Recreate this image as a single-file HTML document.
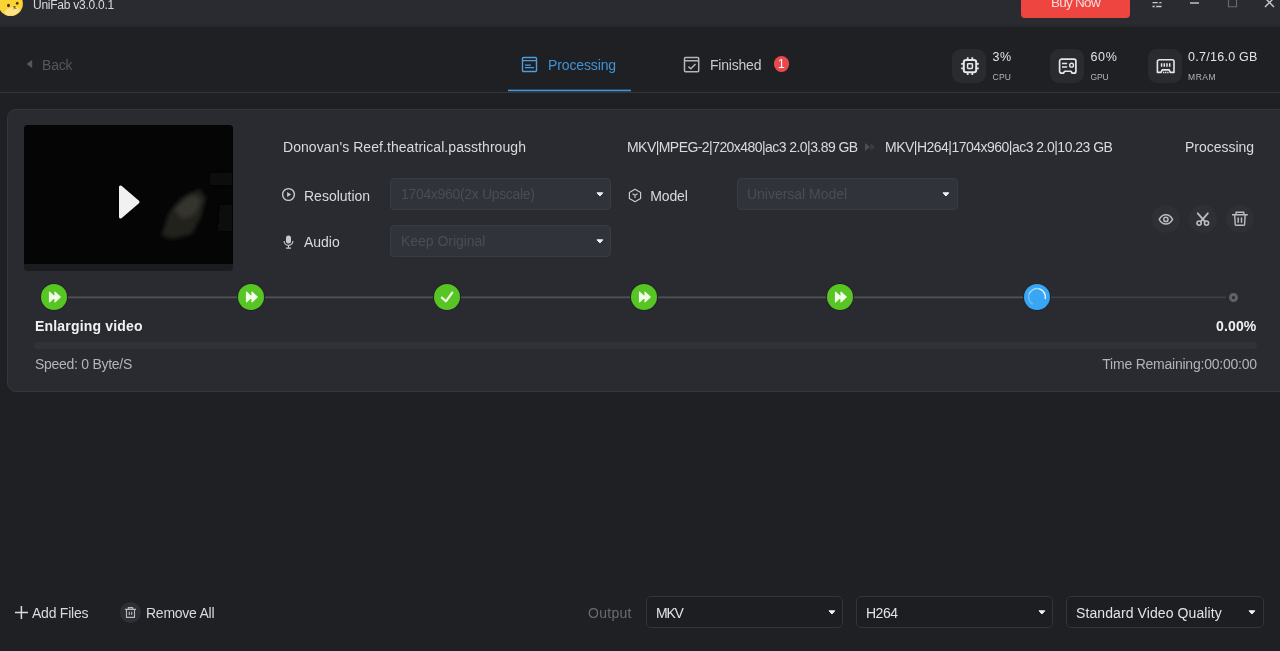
<!DOCTYPE html>
<html lang="en">
<head>
<meta charset="utf-8">
<title>UniFab v3.0.0.1</title>
<style>
*{box-sizing:border-box;margin:0;padding:0}
html,body{width:1280px;height:651px;overflow:hidden;background:#1f2024}
body{will-change:transform;position:relative;font-family:"Liberation Sans",sans-serif;color:#d6d7da;font-size:14px}
.abs{position:absolute}
.t{position:absolute;white-space:nowrap;line-height:20px;height:20px}
#titlebar{left:0;top:0;width:1280px;height:26px;background:#2a2b30}
#buy{left:1021px;top:-7px;width:109px;height:25px;background:#ee4541;border-radius:4px;color:#f8dbd9;text-align:center;font-size:13.5px;line-height:20px}
#sep{left:0;top:92px;width:1280px;height:1px;background:#35363b}
#card{left:7px;top:109px;width:1290px;height:283px;background:#2a2b30;border:1px solid #35363b;border-radius:9px}
.iconbox{position:absolute;top:49px;width:34px;height:34px;border-radius:9px;background:#2a2b2f}
.sel{position:absolute;height:32px;border-radius:4px;background:#31333a;border:1px solid #393b42}
.sel2{position:absolute;height:32px;border-radius:5px;background:#1d1e21;border:1px solid #34353a}
.caret{position:absolute;width:0;height:0;border-left:4px solid transparent;border-right:4px solid transparent;border-top:5px solid #e8e8ea}
.step{position:absolute;top:284px;width:26px;height:26px;border-radius:50%;background:#57c523}
.rbtn{position:absolute;top:205px;width:28px;height:28px;border-radius:50%;background:#2f3036}
</style>
</head>
<body>
<!-- title bar -->
<div id="titlebar" class="abs"></div><div class="abs" style="left:0;top:26px;width:1280px;height:1px;background:#25262a"></div>
<svg class="abs" style="left:0;top:0" width="26" height="20" viewBox="0 0 26 20">
  <circle cx="10.600" cy="3.700" r="12.300" fill="#fad434"/>
  <ellipse cx="12" cy="11.300" rx="7.500" ry="4" fill="#fde48c" transform="rotate(-14 12 11.300)"/>
  <ellipse cx="8.500" cy="5.500" rx="1.500" ry="1.700" fill="#5a2e08"/>
  <ellipse cx="17.200" cy="3.300" rx="1.300" ry="1.500" fill="#5a2e08"/>
  <ellipse cx="14.500" cy="6.900" rx="1.200" ry=".900" fill="#6b4a12"/>
  <path d="M13.300 9.200l1.500-.900 1.700.300" stroke="#8a6a20" stroke-width=".800" fill="none"/>
</svg>
<div class="t" id="ut" style="letter-spacing:-0.248px;left:33px;top:-5px;font-size:12px;color:#d9dadd">UniFab v3.0.0.1</div>
<div id="buy" class="abs"><span id="buyt" style="letter-spacing:-0.75px">Buy Now</span></div>


<!-- window controls -->
<svg class="abs" style="left:1145px;top:0" width="135" height="14" viewBox="0 0 135 14">
  <g stroke="#c9cacd" stroke-width="1.4" fill="none" stroke-linecap="butt">
    <path d="M7.500 2.700h9M7.500 6.500h9" stroke-width="1.300"/>
    <path d="M45 3h9"/>
    <path d="M83.500 -1v7.800h8v-7.800" stroke="#6a6b70" stroke-width="1.100"/>
    <path d="M120 -2l9 9M129 -2l-9 9"/>
  </g>
  <circle cx="13.500" cy="2.700" r=".900" fill="#2a2b30"/><circle cx="10.500" cy="6.500" r=".900" fill="#2a2b30"/>
</svg>

<!-- nav -->
<svg class="abs" style="left:26px;top:59px" width="8" height="10" viewBox="0 0 8 10"><path d="M6.200 .800v8.400L.600 5z" fill="#55575c"/></svg>
<div class="t" id="back" style="letter-spacing:-0.206px;left:42px;top:55px;font-size:14px;color:#55575c">Back</div>

<svg class="abs" style="left:521px;top:55.700px" width="17" height="17" viewBox="0 0 17 17" fill="none" stroke="#4f9ddb" stroke-width="1.400">
  <rect x="1.500" y="1.500" width="14" height="14" rx="1"/><path d="M1.500 4.600h14M4 9.100h5.800M4 11.600h9"/>
</svg>
<div class="t" id="tproc" style="letter-spacing:-0.127px;left:548px;top:55px;font-size:14px;color:#3f93d8">Processing</div>
<div class="abs" style="left:508px;top:90px;width:123px;height:1px;background:#4596d6;box-shadow:0 -1px 0 rgba(69,150,214,.35),0 1px 0 rgba(69,150,214,.25)"></div>

<svg class="abs" style="left:682.600px;top:55.600px" width="17" height="17" viewBox="0 0 17 17" fill="none" stroke="#b4b5b9" stroke-width="1.500">
  <rect x="1.500" y="1.500" width="14.200" height="14.200" rx="1"/><path d="M1.500 4.700h14.200M5.400 10.600l2.500 2.100 4.600-4.800"/>
</svg>
<div class="t" id="tfin" style="letter-spacing:-0.209px;left:710px;top:55px;font-size:14px;color:#c9cacd">Finished</div>
<div class="abs" style="left:773.500px;top:56.300px;width:15.500px;height:15.500px;border-radius:50%;background:#ea494c;color:#fff;font-size:12px;line-height:17px;text-align:center">1</div>

<!-- stats -->
<div class="iconbox" style="left:952px"></div>
<div class="iconbox" style="left:1050px"></div>
<div class="iconbox" style="left:1148px"></div>
<svg class="abs" style="left:959px;top:56px" width="22" height="20" viewBox="0 0 22 20" fill="none" stroke="#e6e6e8">
  <rect x="4.800" y="3.900" width="12.400" height="12.400" rx="2.300" stroke-width="2"/><rect x="8.600" y="7.700" width="4.800" height="4.800" rx=".700" stroke-width="1.500"/>
  <path d="M8.700 1.300v2M13.300 1.300v2M8.700 16.900v2M13.300 16.900v2M2.200 7.800h2M2.200 12.400h2M17.800 7.800h2M17.800 12.400h2" stroke-width="1.800"/>
</svg>
<svg class="abs" style="left:1057px;top:56px" width="22" height="20" viewBox="0 0 22 20" fill="none" stroke="#e6e6e8" stroke-width="1.700" stroke-linejoin="round">
  <path d="M4.600 3.150h12.300a2 2 0 0 1 2 2v10a2 2 0 0 1-2 2h-1.700l-1.300-1.900h-6.200l-1.300 1.900h-1.800a2 2 0 0 1-2-2v-10a2 2 0 0 1 2-2z"/>
  <path d="M5 7.600h5.200M5 10.900h5.200" stroke-width="1.500"/><circle cx="14.600" cy="9.200" r="1.900" stroke-width="1.400"/>
</svg>
<svg class="abs" style="left:1155px;top:56px" width="22" height="20" viewBox="0 0 22 20" fill="none" stroke="#e6e6e8" stroke-width="1.600" stroke-linejoin="round">
  <path d="M4.200 3.800h13a1.800 1.800 0 0 1 1.800 1.800v10.800h-3.700l-1.100-2.500h-7l-1.100 2.500h-3.700v-10.800a1.800 1.800 0 0 1 1.800-1.800z"/>
  <path d="M6.600 7.200v3.600M9.300 7.200v3.600M12 7.200v3.600M14.700 7.200v3.600" stroke-width="1.500"/>
  <path d="M8 16.500h5.600" stroke-width="1.400" stroke-dasharray="1.400 0.700"/>
</svg>
<div class="t" id="s1" style="letter-spacing:0.461px;left:992.5px;top:46.5px;font-size:12.5px;color:#e2e3e5">3%</div>
<div class="t" id="s2" style="letter-spacing:0.69px;left:1090.4px;top:46.5px;font-size:12.5px;color:#e2e3e5">60%</div>
<div class="t" id="s3" style="letter-spacing:0.262px;left:1188.1px;top:46.5px;font-size:12.5px;color:#e2e3e5">0.7/16.0 GB</div>
<div class="t" id="l1" style="letter-spacing:0.149px;left:992.6px;top:67.3px;font-size:8.5px;color:#b4b5b9">CPU</div>
<div class="t" id="l2" style="letter-spacing:-0.041px;left:1090.4px;top:67.3px;font-size:8.5px;color:#b4b5b9">GPU</div>
<div class="t" id="l3" style="letter-spacing:0.504px;left:1188.1px;top:67.3px;font-size:8.5px;color:#b4b5b9">MRAM</div>

<div id="sep" class="abs"></div>
<div id="card" class="abs"></div>

<!-- thumbnail -->
<div class="abs" style="left:24px;top:125px;width:209px;height:146px;border-radius:4px;background:#1b1c1f;overflow:hidden">
  <div class="abs" style="left:0;top:0;width:209px;height:139px;background:#050506"></div>
  <svg class="abs" style="left:0;top:0" width="209" height="139" viewBox="0 0 209 139">
    <defs><filter id="bl" x="-30%" y="-30%" width="160%" height="160%"><feGaussianBlur stdDeviation="2.2"/></filter></defs>
    <g filter="url(#bl)">
      <path d="M137 111l8-23 12-15 18-9 7 8-5 20-9 17-18 5z" fill="#24231f"/>
      <path d="M150 84l18-15 9 6-6 14-12 5z" fill="#35342d"/>
      <path d="M196 80h12v26h-14z" fill="#0f0f0f"/>
      <path d="M186 48h22v12h-22z" fill="#0d0d0d"/>
    </g>
  </svg>
</div>
<svg class="abs" style="left:116px;top:182px" width="26" height="40" viewBox="0 0 26 40"><path d="M4.5 5v30l17.5-15z" fill="#f1f1f1" stroke="#f1f1f1" stroke-width="3" stroke-linejoin="round"/></svg>

<!-- title row -->
<div class="t" id="ttl" style="letter-spacing:0.059px;left:283px;top:137px;font-size:14px;color:#d9dadc">Donovan's Reef.theatrical.passthrough</div>
<div class="t" id="inf1" style="letter-spacing:-0.558px;left:627px;top:137px;font-size:14px;color:#d9dadc">MKV|MPEG-2|720x480|ac3 2.0|3.89 GB</div>
<svg class="abs" style="left:864px;top:142px" width="13" height="10" viewBox="0 0 13 10"><path d="M1 1l5 4-5 4z" fill="#4d4e53"/><path d="M6.500 1.500l4.500 3.500-4.500 3.500z" fill="#3c3d42"/></svg>
<div class="t" id="inf2" style="letter-spacing:-0.516px;left:885px;top:137px;font-size:14px;color:#d9dadc">MKV|H264|1704x960|ac3 2.0|10.23 GB</div>
<div class="t" id="stat" style="letter-spacing:-0.027px;left:1185px;top:137px;font-size:14px;color:#d9dadc">Processing</div>

<!-- resolution / audio / model -->
<svg class="abs" style="left:281px;top:187.400px" width="15" height="15" viewBox="0 0 15 15" fill="none"><circle cx="7.500" cy="7.500" r="5.900" stroke="#c9cacd" stroke-width="1.400"/><path d="M6.1 5v5l4-2.5z" fill="#c9cacd"/></svg>
<div class="t" id="lres" style="letter-spacing:-0.006px;left:304px;top:186px;font-size:14px;color:#d9dadc">Resolution</div>
<div class="sel" style="left:390px;top:178px;width:221px"></div>
<div class="t" id="vres" style="letter-spacing:-0.325px;left:401px;top:184px;font-size:14px;color:#4b4d55">1704x960(2x Upscale)</div>
<svg class="abs" style="left:596px;top:191.8px" width="8" height="6" viewBox="0 0 8 6"><path d="M1 0.800h5.800l-2.900 3.200z" fill="#f2f2f3" stroke="#f2f2f3" stroke-width="1" stroke-linejoin="round"/></svg>

<svg class="abs" style="left:282.200px;top:234.300px" width="13" height="15.800" viewBox="0 0 14 17" fill="none"><rect x="4.3" y="1.5" width="5.4" height="8.6" rx="2.7" fill="#c9cacd"/><path d="M2.3 7.6a4.7 4.7 0 0 0 9.4 0M7 12.4v2.6M4.3 15.2h5.4" stroke="#c9cacd" stroke-width="1.2"/></svg>
<div class="t" id="laud" style="letter-spacing:-0.013px;left:304px;top:232px;font-size:14px;color:#d9dadc">Audio</div>
<div class="sel" style="left:390px;top:225px;width:221px"></div>
<div class="t" id="vaud" style="letter-spacing:-0.033px;left:401px;top:231px;font-size:14px;color:#4b4d55">Keep Original</div>
<svg class="abs" style="left:596px;top:238.8px" width="8" height="6" viewBox="0 0 8 6"><path d="M1 0.800h5.800l-2.900 3.200z" fill="#f2f2f3" stroke="#f2f2f3" stroke-width="1" stroke-linejoin="round"/></svg>

<svg class="abs" style="left:627px;top:188px" width="16" height="15" viewBox="0 0 16 15" fill="none" stroke="#c9cacd" stroke-width="1.2"><path d="M8 1.3l5.6 3.1v6.2L8 13.7l-5.6-3.1V4.4z" stroke-linejoin="round"/><path d="M5.5 5.8L8 7.3l2.5-1.5M8 7.3v2.8" stroke-width="1.1"/></svg>
<div class="t" id="lmod" style="letter-spacing:-0.148px;left:650.3px;top:186px;font-size:14px;color:#d9dadc">Model</div>
<div class="sel" style="left:737px;top:178px;width:221px"></div>
<div class="t" id="vmod" style="letter-spacing:-0.018px;left:747px;top:184px;font-size:14px;color:#4b4d55">Universal Model</div>
<svg class="abs" style="left:942px;top:191.8px" width="8" height="6" viewBox="0 0 8 6"><path d="M1 0.800h5.800l-2.900 3.200z" fill="#f2f2f3" stroke="#f2f2f3" stroke-width="1" stroke-linejoin="round"/></svg>

<!-- action buttons -->
<div class="rbtn" style="left:1152px"></div>
<div class="rbtn" style="left:1189px"></div>
<div class="rbtn" style="left:1226px"></div>
<svg class="abs" style="left:1157px;top:211px" width="18" height="17" viewBox="0 0 18 17" fill="none" stroke="#bbbcc1" stroke-width="1.500"><path d="M2.200 8.400C4 5.100 6.400 3.700 8.900 3.700S13.800 5.100 15.600 8.400C13.800 11.700 11.400 13.100 8.900 13.100S4 11.700 2.200 8.400z" stroke-linejoin="round"/><circle cx="8.900" cy="8.400" r="2.100"/></svg>
<svg class="abs" style="left:1194px;top:211px" width="18" height="17" viewBox="0 0 18 17" fill="none" stroke="#bbbcc1" stroke-width="1.800"><path d="M3.800 2.300l7.200 8.300M13.800 2.300l-7.200 8.300" stroke-linecap="round"/><circle cx="5.100" cy="12.100" r="2.100" stroke-width="1.600"/><circle cx="12.500" cy="12.100" r="2.100" stroke-width="1.600"/></svg>
<svg class="abs" style="left:1231px;top:210px" width="18" height="18" viewBox="0 0 18 18" fill="none" stroke="#bbbcc1" stroke-width="1.400"><path d="M1 4.800h15.800M5 4.500v-2.300h7.800v2.300M3.700 5.200l.500 9.200a1 1 0 0 0 1 .900h7.400a1 1 0 0 0 1-.900l.500-9.200" stroke-linejoin="round"/><path d="M7.200 7.500v5.300M10.500 7.500v5.300" stroke-width="1.500"/></svg>

<!-- steps -->
<div class="abs" style="left:54px;top:296px;width:983px;height:3px;background:linear-gradient(#3f4045 0 1px,#515257 1px 2px,#323338 2px 3px)"></div>
<div class="abs" style="left:1037px;top:296px;width:196px;height:3px;background:linear-gradient(#34353a 0 1px,#3e3f44 1px 2px,#2d2e33 2px 3px)"></div>
<div class="step" style="left:40px;top:283px;width:28px;height:28px;background:#242529"></div>
<div class="step" style="left:41px"></div>
<svg class="abs" style="left:41px;top:284px" width="26" height="26" viewBox="0 0 26 26"><path d="M8.500 8.100l5.200 4.900-5.200 4.900zM14 8.100l5.200 4.900-5.200 4.900z" fill="#f3fbe9" stroke="#f3fbe9" stroke-width="1.2" stroke-linejoin="round"/></svg>
<div class="step" style="left:237px;top:283px;width:28px;height:28px;background:#242529"></div>
<div class="step" style="left:238px"></div>
<svg class="abs" style="left:238px;top:284px" width="26" height="26" viewBox="0 0 26 26"><path d="M8.500 8.100l5.200 4.900-5.200 4.900zM14 8.100l5.200 4.900-5.200 4.900z" fill="#f3fbe9" stroke="#f3fbe9" stroke-width="1.2" stroke-linejoin="round"/></svg>
<div class="step" style="left:433px;top:283px;width:28px;height:28px;background:#242529"></div>
<div class="step" style="left:434px"></div>
<svg class="abs" style="left:434px;top:284px" width="26" height="26" viewBox="0 0 26 26"><path d="M7.900 13.600l4 3.700 6.400-8.600" fill="none" stroke="#f3fbe9" stroke-width="2.200" stroke-linecap="round" stroke-linejoin="round"/></svg>
<div class="step" style="left:630px;top:283px;width:28px;height:28px;background:#242529"></div>
<div class="step" style="left:631px"></div>
<svg class="abs" style="left:631px;top:284px" width="26" height="26" viewBox="0 0 26 26"><path d="M8.500 8.100l5.200 4.900-5.200 4.900zM14 8.100l5.200 4.900-5.200 4.900z" fill="#f3fbe9" stroke="#f3fbe9" stroke-width="1.2" stroke-linejoin="round"/></svg>
<div class="step" style="left:826px;top:283px;width:28px;height:28px;background:#242529"></div>
<div class="step" style="left:827px"></div>
<svg class="abs" style="left:827px;top:284px" width="26" height="26" viewBox="0 0 26 26"><path d="M8.500 8.100l5.200 4.900-5.200 4.900zM14 8.100l5.200 4.900-5.200 4.900z" fill="#f3fbe9" stroke="#f3fbe9" stroke-width="1.2" stroke-linejoin="round"/></svg>
<div class="step" style="left:1023px;top:283px;width:28px;height:28px;background:#25262b"></div>
<div class="step" style="left:1024px;background:#38a6f5"></div>
<svg class="abs" style="left:1024px;top:284px" width="26" height="26" viewBox="0 0 26 26"><g fill="none" stroke="#e4f3fd" stroke-width="1.500"><path d="M8.800 20.270A8.400 8.400 0 0 1 5.110 10.130" opacity=".3"/><path d="M5.110 10.130A8.400 8.400 0 0 1 15.870 5.110" opacity=".6"/><path d="M15.870 5.110A8.400 8.400 0 0 1 21.270 14.460" stroke-linecap="round"/></g></svg>
<div class="abs" style="left:1226px;top:290px;width:14px;height:14px;border-radius:50%;background:#2a2b30"></div><div class="abs" style="left:1228.500px;top:292.500px;width:9px;height:9px;border-radius:50%;border:3px solid #606166;background:#25262a"></div>
<div class="t" id="enl" style="letter-spacing:0.182px;left:35px;top:316px;font-size:14px;font-weight:bold;color:#f1f1f2">Enlarging video</div>
<div class="t" id="pct" style="letter-spacing:0.139px;left:1216px;top:316px;font-size:14px;font-weight:bold;color:#f1f1f2">0.00%</div>
<div class="abs" style="left:34px;top:342px;width:1223px;height:7px;border-radius:3.5px;background:#313238"></div>
<div class="t" id="spd" style="letter-spacing:-0.279px;left:35px;top:354px;font-size:14px;color:#b3b4b8">Speed: 0 Byte/S</div>
<div class="t" id="rem" style="letter-spacing:-0.23px;left:1102.3px;top:354px;font-size:14px;color:#b3b4b8">Time Remaining:00:00:00</div>
<!-- bottom bar -->
<svg class="abs" style="left:14px;top:605px" width="15" height="15" viewBox="0 0 15 15"><path d="M7.400 1v13M1 7.500h13" stroke="#d9dadc" stroke-width="1.500" fill="none"/></svg>
<div class="t" id="addf" style="letter-spacing:-0.234px;left:32px;top:603px;font-size:14px;color:#d9dadc">Add Files</div>
<div class="abs" style="left:120px;top:602px;width:21px;height:21px;border-radius:50%;background:#2e2f34"></div>
<svg class="abs" style="left:124.300px;top:606.200px" width="13" height="13" viewBox="0 0 13 13" fill="none" stroke="#b9babf" stroke-width="1.100"><path d="M1 3.400h11M4.300 3.200v-1.600h4.400v1.600M2.500 3.600v7.800h8v-7.800" stroke-linejoin="round"/><path d="M5.300 5.800v3.300M7.700 5.800v3.300"/></svg>
<div class="t" id="rmall" style="letter-spacing:-0.256px;left:146px;top:603px;font-size:14px;color:#d9dadc">Remove All</div>
<div class="t" id="outp" style="letter-spacing:0.286px;left:588px;top:603px;font-size:14px;color:#6a6b70">Output</div>
<div class="sel2" style="left:646px;top:596px;width:197px"></div>
<div class="sel2" style="left:856px;top:596px;width:197px"></div>
<div class="sel2" style="left:1066px;top:596px;width:198px"></div>
<div class="t" id="o1" style="letter-spacing:-1.198px;left:656px;top:603px;font-size:14px;color:#e2e3e5">MKV</div>
<div class="t" id="o2" style="letter-spacing:-0.492px;left:866px;top:603px;font-size:14px;color:#e2e3e5">H264</div>
<div class="t" id="o3" style="letter-spacing:0.092px;left:1076px;top:603px;font-size:14px;color:#e2e3e5">Standard Video Quality</div>
<svg class="abs" style="left:828px;top:609.8px" width="8" height="6" viewBox="0 0 8 6"><path d="M1 0.800h5.800l-2.900 3.200z" fill="#f2f2f3" stroke="#f2f2f3" stroke-width="1" stroke-linejoin="round"/></svg>
<svg class="abs" style="left:1038px;top:609.8px" width="8" height="6" viewBox="0 0 8 6"><path d="M1 0.800h5.800l-2.900 3.200z" fill="#f2f2f3" stroke="#f2f2f3" stroke-width="1" stroke-linejoin="round"/></svg>
<svg class="abs" style="left:1248px;top:609.8px" width="8" height="6" viewBox="0 0 8 6"><path d="M1 0.800h5.800l-2.900 3.200z" fill="#f2f2f3" stroke="#f2f2f3" stroke-width="1" stroke-linejoin="round"/></svg>
</body>
</html>
